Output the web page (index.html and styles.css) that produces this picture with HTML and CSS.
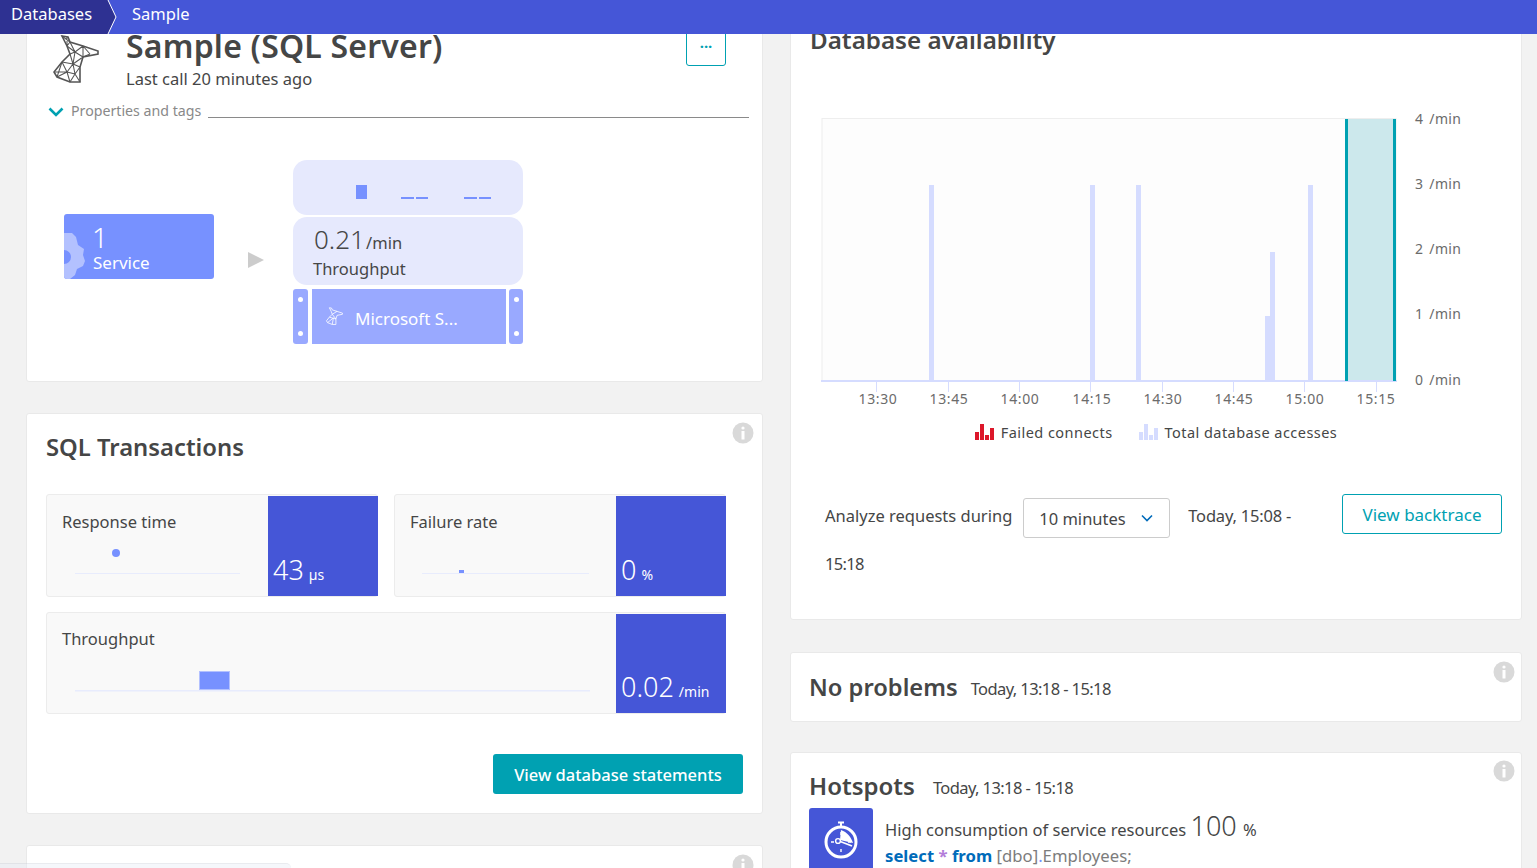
FILE: index.html
```html
<!DOCTYPE html>
<html lang="en">
<head>
<meta charset="utf-8">
<title>Sample (SQL Server)</title>
<link rel="stylesheet" href="styles.css">
</head>
<body>
<header class="topbar">
  <a class="crumb crumb-root">Databases</a>
  <svg class="crumb-sep" width="18" height="34" viewBox="0 0 18 34"><path d="M0 0H6L14 17L6 34H0Z" fill="#2e3192"/><path d="M6 0L14 17L6 34" fill="none" stroke="#fff" stroke-width="1"/></svg>
  <a class="crumb crumb-leaf">Sample</a>
</header>
<main class="page">
  <div class="col col-left">
    <section class="card card-entity">
      <div class="entity-head">
        <svg class="sql-icon" width="65" height="55" viewBox="0 0 65 55" fill="none" stroke="#555" stroke-width="1.05">
          <path d="M17 2L23 3L25 8L38 12L53 17L53 20L38 23L35 33L35 48L25 48L12 43L9 38L17 28L25 20L22 12Z" stroke-width="1.6"/>
          <path d="M22 12L25 8M17 2L25 8M22 3L22 12M25 8L30 18M22 12L30 18M25 20L30 18M30 18L38 12M30 18L38 23M38 12L38 23M38 12L45 20M38 23L45 20M25 20L28 30M30 18L28 30M38 23L28 30M35 33L28 30M17 28L28 30M17 28L22 38M28 30L22 38M28 30L30 40M35 33L30 40M22 38L30 40M9 38L22 38M12 43L22 38M22 38L25 48M30 40L25 48M30 40L35 48M17 28L12 43"/>
        </svg>
        <div class="entity-text">
          <h1 class="entity-title">Sample (SQL Server)</h1>
          <p class="entity-sub">Last call 20 minutes ago</p>
        </div>
        <button class="more-btn">···</button>
      </div>
      <div class="props">
        <svg class="props-chevron" width="16" height="10" viewBox="0 0 16 10" fill="none" stroke="#00a1b2" stroke-width="2.6"><path d="M1.5 1.5L8 8L14.5 1.5"/></svg>
        <span class="props-label">Properties and tags</span>
        <span class="props-rule"></span>
      </div>
      <div class="diagram">
        <div class="service-box">
          <svg class="gear" width="22" height="46" viewBox="0 0 22 46"><path d="M0 0H8L12 4L14 12L20 16L19 22L21 28L19 33L13 36L11 42L6 46H0V31A7 7 0 0 0 0 17Z" fill="#b3c1ff"/></svg>
          <div class="service-text"><span class="service-num">1</span><span class="service-name">Service</span></div>
        </div>
        <svg class="arrow" width="16" height="16" viewBox="0 0 16 16"><path d="M0 0L16 8L0 16Z" fill="#ccc"/></svg>
        <div class="stack">
          <div class="stack-spark">
            <svg width="230" height="55" viewBox="0 0 230 55"><g fill="#7791ff"><rect x="63" y="25" width="11" height="14"/><rect x="108" y="37" width="13" height="2"/><rect x="123" y="37" width="12" height="2"/><rect x="171" y="37" width="13" height="2"/><rect x="186" y="37" width="12" height="2"/></g></svg>
          </div>
          <div class="stack-metric">
            <div><span class="stack-value">0.21</span> <span class="stack-unit">/min</span></div>
            <div class="stack-label">Throughput</div>
          </div>
          <div class="stack-row">
            <span class="handle"><i></i><i></i></span>
            <span class="db-name">
              <svg width="24" height="20" viewBox="0 0 65 55" fill="none" stroke="#fff" stroke-width="2.2"><path d="M17 2L23 3L25 8L38 12L53 17L53 20L38 23L35 33L35 48L25 48L12 43L9 38L17 28L25 20L22 12Z"/><path d="M25 20L38 12M25 20L35 33M17 28L35 33M12 43L28 30M28 30L25 48"/></svg>
              <span class="db-label">Microsoft S...</span>
            </span>
            <span class="handle handle-end"><i></i><i></i></span>
          </div>
        </div>
      </div>
    </section>

    <section class="card card-sql">
      <svg class="info" width="22" height="22" viewBox="0 0 22 22"><circle cx="11" cy="11" r="10.5" fill="#d9d9d9"/><circle cx="11" cy="6" r="1.6" fill="#fff"/><rect x="9.5" y="9" width="3" height="8.5" fill="#fff"/></svg>
      <h2 class="card-title sql-title">SQL Transactions</h2>
      <div class="tiles">
        <div class="tile">
          <div class="tile-main">
            <div class="tile-label">Response time</div>
            <svg class="spark" width="206" height="40" viewBox="0 0 206 40"><rect x="13" y="33" width="165" height="1" fill="#e8ecfd"/><circle cx="54" cy="13" r="4" fill="#7791ff"/></svg>
          </div>
          <div class="tile-value"><span class="num">43</span> <span class="unit">µs</span></div>
        </div>
        <div class="tile">
          <div class="tile-main">
            <div class="tile-label">Failure rate</div>
            <svg class="spark" width="206" height="40" viewBox="0 0 206 40"><rect x="12" y="33" width="167" height="1" fill="#e8ecfd"/><rect x="49" y="30" width="5" height="3" fill="#7791ff"/></svg>
          </div>
          <div class="tile-value"><span class="num">0</span> <span class="unit">%</span></div>
        </div>
        <div class="tile tile-wide">
          <div class="tile-main">
            <div class="tile-label">Throughput</div>
            <svg class="spark" width="560" height="40" viewBox="0 0 560 40"><rect x="13" y="33" width="515" height="1.5" fill="#e8ecfd"/><rect x="137.5" y="14.5" width="30" height="18" fill="#7791ff" stroke="#b3c1ff"/></svg>
          </div>
          <div class="tile-value"><span class="num">0.02</span> <span class="unit">/min</span></div>
        </div>
      </div>
      <div class="sql-actions"><button class="btn-primary">View database statements</button></div>
    </section>

    <section class="card card-next">
      <svg class="info" width="22" height="22" viewBox="0 0 22 22"><circle cx="11" cy="11" r="10.5" fill="#d9d9d9"/><circle cx="11" cy="6" r="1.6" fill="#fff"/><rect x="9.5" y="9" width="3" height="8.5" fill="#fff"/></svg>
    </section>
  </div>

  <div class="col col-right">
    <section class="card card-avail">
      <h2 class="card-title avail-title">Database availability</h2>
      <svg class="chart" width="690" height="300" viewBox="0 0 690 300">
        <rect x="11" y="0.5" width="574" height="262" fill="#fdfdfd" stroke="#eeeeee"/>
        <g fill="#d5dcff">
          <rect x="118" y="67" width="5" height="196"/>
          <rect x="279" y="67" width="5" height="196"/>
          <rect x="325" y="67" width="5" height="196"/>
          <rect x="497" y="67" width="5" height="196"/>
          <rect x="454" y="198" width="5" height="65"/>
          <rect x="459" y="134" width="5" height="129"/>
          <rect x="10" y="262" width="576" height="2"/>
          <rect x="65" y="263" width="1" height="11"/><rect x="137" y="263" width="1" height="11"/>
          <rect x="208" y="263" width="1" height="11"/><rect x="279" y="263" width="1" height="11"/>
          <rect x="351" y="263" width="1" height="11"/><rect x="422" y="263" width="1" height="11"/>
          <rect x="493" y="263" width="1" height="11"/><rect x="565" y="263" width="1" height="11"/>
        </g>
        <rect x="534" y="1" width="51" height="261" fill="#cce8ec"/>
        <rect x="534" y="1" width="3" height="262" fill="#00a1b2"/>
        <rect x="582" y="1" width="3" height="262" fill="#00a1b2"/>
        <g class="chart-x" text-anchor="middle">
          <text x="67" y="286">13:30</text><text x="138" y="286">13:45</text><text x="209" y="286">14:00</text><text x="281" y="286">14:15</text>
          <text x="352" y="286">14:30</text><text x="423" y="286">14:45</text><text x="494" y="286">15:00</text><text x="565" y="286">15:15</text>
        </g>
        <g class="chart-y">
          <text x="604" y="6">4 <tspan dx="2">/min</tspan></text>
          <text x="604" y="71">3 <tspan dx="2">/min</tspan></text>
          <text x="604" y="136">2 <tspan dx="2">/min</tspan></text>
          <text x="604" y="201">1 <tspan dx="2">/min</tspan></text>
          <text x="604" y="267">0 <tspan dx="2">/min</tspan></text>
        </g>
      </svg>
      <div class="legend">
        <span class="legend-item"><svg width="20" height="18" viewBox="0 0 20 18"><g fill="#dc172a"><rect x="0" y="9" width="4" height="8"/><rect x="5" y="1" width="4" height="16"/><rect x="10" y="12" width="4" height="5"/><rect x="15" y="5" width="4" height="12"/></g></svg>Failed connects</span>
        <span class="legend-item"><svg width="20" height="18" viewBox="0 0 20 18"><g fill="#d5dcff"><rect x="0" y="9" width="4" height="8"/><rect x="5" y="1" width="4" height="16"/><rect x="10" y="12" width="4" height="5"/><rect x="15" y="5" width="4" height="12"/></g></svg>Total database accesses</span>
      </div>
      <div class="analyze">
        <span class="analyze-label">Analyze requests during</span>
        <span class="select">10 minutes<svg width="12" height="8" viewBox="0 0 12 8" fill="none" stroke="#006bba" stroke-width="1.6"><path d="M1 1.5L6 6.5L11 1.5"/></svg></span>
        <span class="analyze-range">Today, 15:08 -</span>
        <button class="btn-outline">View backtrace</button>
      </div>
      <div class="analyze-end">15:18</div>
    </section>

    <section class="card card-problems">
      <svg class="info" width="22" height="22" viewBox="0 0 22 22"><circle cx="11" cy="11" r="10.5" fill="#d9d9d9"/><circle cx="11" cy="6" r="1.6" fill="#fff"/><rect x="9.5" y="9" width="3" height="8.5" fill="#fff"/></svg>
      <h2 class="card-title">No problems</h2>
      <span class="timeframe">Today, 13:18 - 15:18</span>
    </section>

    <section class="card card-hotspots">
      <svg class="info" width="22" height="22" viewBox="0 0 22 22"><circle cx="11" cy="11" r="10.5" fill="#d9d9d9"/><circle cx="11" cy="6" r="1.6" fill="#fff"/><rect x="9.5" y="9" width="3" height="8.5" fill="#fff"/></svg>
      <div class="hot-head">
        <h2 class="card-title hot-title">Hotspots</h2>
        <span class="timeframe">Today, 13:18 - 15:18</span>
      </div>
      <div class="hot-row">
        <div class="hot-icon">
          <svg width="64" height="64" viewBox="0 0 64 64" fill="none" stroke="#fff">
            <circle cx="32" cy="34" r="15" stroke-width="3"/>
            <path d="M29 14.5H35M32 14.5V19" stroke-width="2"/>
            <path d="M32 24V27M32 41V44M22 34H25M39 34H42" stroke-width="1.4"/>
            <path d="M32 22C38 24 42 29 44 35L31 32Z" fill="#fff" stroke="none"/>
            <path d="M30 33L43 38" stroke-width="1.6"/>
            <circle cx="29" cy="33" r="2.4" fill="#4556d7" stroke-width="1.4"/>
          </svg>
        </div>
        <div class="hot-text">
          <div class="hot-line">High consumption of service resources <span class="hot-num">100</span> <span class="hot-unit">%</span></div>
          <code class="hot-sql"><b class="kw">select</b> <b class="star">*</b> <b class="kw">from</b> <span class="ident">[dbo]</span><span class="dot">.</span><span class="ident">Employees;</span></code>
        </div>
      </div>
    </section>
  </div>
</main>
<div class="peek"></div>
</body>
</html>
```
FILE: styles.css
```css
* { box-sizing: border-box; }
html, body { margin: 0; height: 100%; }
body {
  height: 100vh;
  overflow: hidden;
  display: flex;
  flex-direction: column;
  background: #f2f2f2;
  color: #454646;
  font-family: "Noto Sans", "Open Sans", sans-serif;
  font-size: 16px;
}
h1, h2, p { margin: 0; }
button { font-family: inherit; cursor: pointer; }

.topbar {
  flex: none;
  height: 34px;
  display: flex;
  align-items: center;
  background: #4556d7;
  color: #fff;
  font-size: 16.5px;
  line-height: 28px;
}
.crumb-root { align-self: stretch; display: flex; align-items: center; padding: 0 0 6px 11px; width: 102px; background: #2e3192; }
.crumb-sep { flex: none; }
.crumb-leaf { margin-left: 12px; padding-bottom: 6px; }

.page {
  flex: 1;
  min-height: 0;
  overflow: hidden;
  display: grid;
  grid-template-columns: 737px 732px;
  column-gap: 27px;
  padding-left: 26px;
  align-items: start;
}
.col { display: flex; flex-direction: column; margin-top: -20px; }

.card {
  position: relative;
  background: #fff;
  border: 1px solid #e9e9e9;
  border-radius: 3px;
}
.info { position: absolute; right: 8px; top: 8px; }
.card-title { font-size: 23.7px; line-height: 32px; font-weight: 600; color: #454646; }

/* entity card */
.card-entity { height: 368px; padding: 0 13px 0 0; }
.entity-head { display: flex; padding: 19px 23px 0 18px; height: 83px; }
.sql-icon { flex: none; margin-right: 16px; }
.entity-text { flex: 1; }
.entity-title { font-size: 32px; letter-spacing: .2px; line-height: 38px; font-weight: 600; margin-top: -7px; color: #454646; }
.entity-sub { font-size: 16.5px; line-height: 24px; margin-top: 2px; }
.more-btn {
  flex: none;
  width: 40px;
  height: 40px;
  margin-top: -8px;
  padding: 0;
  background: #fff;
  border: 1px solid #00a1b2;
  border-radius: 3px;
  color: #00a1b2;
  font-weight: 700;
  font-size: 15px;
  line-height: 1;
}
.props { display: flex; align-items: center; padding-left: 21px; height: 24px; }
.props-chevron { flex: none; margin-top: 3px; }
.props-label { margin-left: 7px; font-size: 14.2px; color: #898989; white-space: nowrap; }
.props-rule { flex: 1; height: 1px; background: #8a8a8a; margin: 14px 0 0 7px; }

.diagram { display: flex; align-items: center; padding-left: 37px; margin-top: 38px; }
.service-box {
  display: flex;
  width: 150px;
  height: 65px;
  margin-bottom: 11px;
  background: #7791ff;
  border-radius: 3px;
  color: #fff;
  overflow: hidden;
  align-items: flex-end;
}
.gear { flex: none; }
.service-text { display: flex; flex-direction: column; margin-left: 7px; padding-bottom: 5px; }
.service-num { font-size: 28px; line-height: 30px; font-weight: 300; margin-left: -1px; }
.service-name { font-size: 17px; line-height: 22px; }
.arrow { margin: 15px 29px 0 34px; flex: none; }
.stack { width: 230px; display: flex; flex-direction: column; }
.stack-spark { height: 55px; background: #e6e9fd; border-radius: 14px; }
.stack-spark svg { display: block; }
.stack-metric { height: 68px; margin-top: 2px; padding: 5px 20px; background: #e6e9fd; border-radius: 14px; }
.stack-value { font-size: 26px; line-height: 34px; font-weight: 300; margin-left: 1px; }
.stack-unit { font-size: 16.5px; margin-left: -3px; }
.stack-label { font-size: 16.5px; line-height: 24px; margin-top: 1px; }
.stack-row { display: flex; height: 55px; margin-top: 4px; color: #fff; }
.handle { width: 15px; background: #99a9ff; border-radius: 3px; display: flex; flex-direction: column; justify-content: space-between; align-items: center; padding: 8px 0; }
.handle-end { width: 14px; }
.handle i { width: 5px; height: 5px; border-radius: 50%; background: #fff; }
.db-name { width: 194px; margin: 0 3px 0 4px; background: #99a9ff; display: flex; align-items: center; gap: 8px; padding-left: 11px; font-size: 17px; white-space: nowrap; }
.db-label { padding-top: 3px; }

/* sql card */
.card-sql { height: 401px; margin-top: 31px; padding: 17px 19px 0; }
.sql-title { font-size: 23.8px; line-height: 32px; }
.tiles { display: grid; grid-template-columns: 332px 332px; gap: 15px 16px; margin-top: 31px; }
.tile { display: flex; height: 103px; background: #f9f9f9; border: 1px solid #ececec; border-radius: 3px; }
.tile-wide { grid-column: 1 / -1; height: 102px; }
.tile-main { flex: 1; padding: 15px 0 0 15px; min-width: 0; }
.tile-label { font-size: 16.5px; line-height: 24px; }
.tile-wide .tile-label { margin-top: -1px; }
.spark { display: block; margin-top: 6px; overflow: visible; }
.tile-value {
  flex: none;
  width: 110px;
  margin: 1px -1px 0 0;
  padding: 0 0 9px 5px;
  background: #4556d7;
  color: #fff;
  display: flex;
  align-items: baseline;
  align-content: flex-end;
  flex-wrap: wrap;
  gap: 5px;
}
.num { font-size: 27px; line-height: 34px; font-weight: 300; }
.unit { font-size: 14px; }
.sql-actions { display: flex; justify-content: flex-end; margin-top: 40px; }
.btn-primary {
  width: 250px;
  height: 40px;
  background: #00a1b2;
  color: #fff;
  border: 0;
  border-radius: 3px;
  font-size: 16.5px;
  font-weight: 500;
}
.card-next { height: 100px; margin-top: 31px; }

/* right column */
.card-avail { height: 606px; padding: 0 19px; overflow: hidden; }
.avail-title { margin-top: 9px; font-size: 24.2px; line-height: 32px; }
.chart { display: block; margin: 62px 0 0 1px; overflow: visible; }
.chart text { font-family: "Noto Sans", sans-serif; font-size: 14px; fill: #6b6b6b; letter-spacing: .6px; }
.chart-y text { letter-spacing: .35px; }
.legend { display: flex; justify-content: center; gap: 26px; margin-top: 2px; }
.legend-item { display: flex; align-items: center; gap: 6px; font-size: 14.5px; letter-spacing: .45px; line-height: 24px; }
.legend-item svg { flex: none; }
.analyze { display: flex; align-items: flex-start; margin-top: 50px; padding-left: 15px; }
.analyze-label { font-size: 16.5px; line-height: 44px; white-space: nowrap; }
.select {
  display: flex;
  align-items: center;
  justify-content: space-between;
  width: 147px;
  height: 40px;
  margin: 4px 0 0 11px;
  padding: 0 16px 0 15px;
  background: #fff;
  border: 1px solid #ccc;
  border-radius: 3px;
  font-size: 16.5px;
}
.analyze-range { margin-left: 18px; font-size: 16.5px; letter-spacing: -.2px; line-height: 44px; white-space: nowrap; }
.btn-outline {
  width: 160px;
  height: 40px;
  margin-left: auto;
  background: #fff;
  color: #00a1b2;
  border: 1px solid #00a1b2;
  border-radius: 3px;
  font-size: 17px;
}
.analyze-end { padding-left: 15px; margin-top: 4px; font-size: 16.5px; letter-spacing: -.7px; line-height: 44px; }
.card-problems {
  height: 70px;
  margin-top: 32px;
  padding: 0 18px;
  display: flex;
  align-items: center;
  gap: 13px;
}
.card-problems .info, .card-hotspots .info { right: 6px; }
.card-hotspots .info { top: 7px; }
.timeframe { font-size: 16.5px; letter-spacing: -.6px; padding-top: 2px; }
.card-hotspots { height: 200px; margin-top: 30px; padding: 17px 18px 0; }
.hot-head { display: flex; align-items: center; gap: 18px; }
.hot-title { font-size: 24px; }
.hot-row { display: flex; margin-top: 6px; }
.hot-icon { flex: none; width: 64px; height: 64px; background: #4556d7; border-radius: 3px; }
.hot-icon svg { display: block; }
.hot-text { margin-left: 12px; padding-top: 1px; }
.hot-line { font-size: 16.5px; line-height: 34px; white-space: nowrap; }
.hot-num { font-size: 27px; font-weight: 300; }
.hot-unit { font-size: 16.5px; margin-left: 2px; }
.hot-sql { display: block; font-family: inherit; font-size: 16.7px; line-height: 18px; }
.kw { color: #006bba; font-weight: 700; }
.star { color: #b27cd9; font-weight: 700; }
.ident { color: #7c7c7c; }
.dot { color: #7791ff; }

.peek {
  position: absolute;
  left: 0;
  top: 863px;
  width: 291px;
  height: 5px;
  background: rgba(230, 235, 245, .4);
  border-top: 1px solid rgba(0, 0, 0, .05);
  border-radius: 0 6px 0 0;
}
```
